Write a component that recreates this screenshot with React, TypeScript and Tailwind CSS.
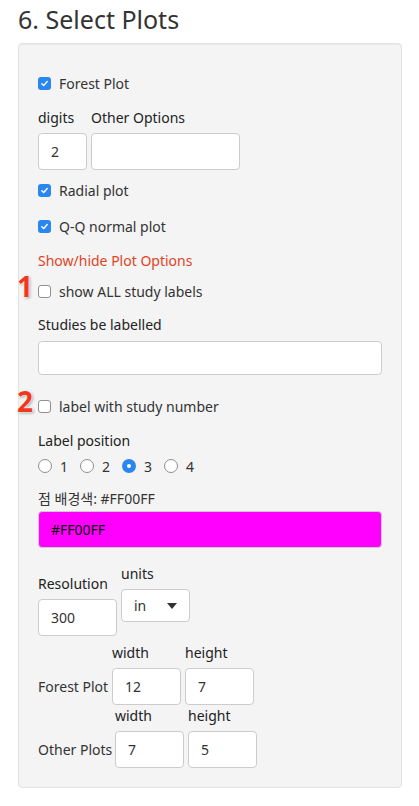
import React from 'react';

const font = { fontFamily: '"Noto Sans", "Noto Sans CJK KR", sans-serif' };

const Check: React.FC<{ checked?: boolean }> = ({ checked }) =>
  checked ? (
    <span className="flex h-[13px] w-[13px] shrink-0 items-center justify-center rounded-[3px] bg-[#2b87f0]">
      <svg viewBox="0 0 10 10" className="h-[9px] w-[9px]">
        <path d="M2 5.2 L4.1 7.2 L8 2.8" fill="none" stroke="white" strokeWidth="1.6" strokeLinecap="round" strokeLinejoin="round" />
      </svg>
    </span>
  ) : (
    <span className="h-[13px] w-[13px] shrink-0 rounded-[3px] border border-[#8f8f8f] bg-white" />
  );

const Radio: React.FC<{ checked?: boolean }> = ({ checked }) =>
  checked ? (
    <span className="flex h-[14px] w-[14px] shrink-0 items-center justify-center rounded-full bg-[#2b87f0]">
      <span className="h-[4px] w-[4px] rounded-full bg-white" />
    </span>
  ) : (
    <span className="h-[14px] w-[14px] shrink-0 rounded-full border border-[#8f8f8f] bg-white" />
  );

const Marker: React.FC<{ n: string }> = ({ n }) => (
  <span className="absolute -left-[21px] -top-[9px] text-[28px] font-bold leading-none text-[#f0391c] [text-shadow:0_0_1px_white,0_0_2px_white,0_0_2px_white,1px_1px_3px_rgba(0,0,0,0.45)]">
    {n}
  </span>
);

const CheckRow: React.FC<{ label: string; checked?: boolean; marker?: string; className?: string }> = ({
  label,
  checked,
  marker,
  className,
}) => (
  <div className={`relative flex h-[20px] items-center gap-[8px] ${className ?? ''}`}>
    {marker && <Marker n={marker} />}
    <Check checked={checked} />
    <span>{label}</span>
  </div>
);

const Box: React.FC<{ value?: string; className?: string; bg?: string }> = ({ value, className, bg }) => (
  <div className={`flex items-center rounded-[4px] border border-[#cccccc] px-[12px] ${bg ?? 'bg-white'} ${className ?? ''}`}>
    {value}
  </div>
);

const Label: React.FC<{ children: React.ReactNode; className?: string }> = ({ children, className }) => (
  <span className={`block h-[20px] font-normal leading-[20px] text-[#222222] ${className ?? ''}`}>
    {children}
  </span>
);

export default function App() {
  return (
    <div className="min-h-[806px] bg-white px-[18px] pt-[4px] text-[14px] text-[#333333]" style={font}>
      <h3 className="h-[39px] text-[25px] leading-[30px] text-[#333333]">6. Select Plots</h3>

      <div className="w-[384px] rounded-[4px] border border-[#e3e3e3] bg-[#f4f4f4] px-[19px] pt-[29px] pb-[19px] shadow-[inset_0_1px_1px_rgba(0,0,0,0.05)]">
        <CheckRow label="Forest Plot" checked />

        <div className="mt-[15px] flex gap-[4px]">
          <div className="flex w-[49px] flex-col">
            <Label>digits</Label>
            <Box value="2" className="mt-[5px] h-[37px] w-[49px]" />
          </div>
          <div className="flex flex-col">
            <Label>Other Options</Label>
            <Box className="mt-[5px] h-[37px] w-[149px]" />
          </div>
        </div>

        <CheckRow label="Radial plot" checked className="mt-[10px]" />
        <CheckRow label="Q-Q normal plot" checked className="mt-[16px]" />

        <div className="mt-[15px] h-[20px] leading-[20px] text-[#e2431f]">Show/hide Plot Options</div>

        <CheckRow label="show ALL study labels" marker="1" className="mt-[10px]" />

        <Label className="mt-[14px]">Studies be labelled</Label>
        <Box className="mt-[6px] h-[34px] w-[344px]" />

        <CheckRow label="label with study number" marker="2" className="mt-[21px]" />

        <Label className="mt-[15px]">Label position</Label>
        <div className="mt-[5px] flex h-[20px] items-center">
          {['1', '2', '3', '4'].map((n) => (
            <div key={n} className="mr-[12px] flex items-center gap-[8px]">
              <Radio checked={n === '3'} />
              <span>{n}</span>
            </div>
          ))}
        </div>

        <div className="mt-[13px] h-[20px] leading-[20px]">점 배경색: #FF00FF</div>
        <Box value="#FF00FF" bg="bg-[#ff00ff]" className="mt-[2px] h-[37px] w-[344px] text-black" />

        <div className="mt-[16px] flex items-start gap-[4px]">
          <div className="flex flex-col pt-[10px]">
            <Label>Resolution</Label>
            <Box value="300" className="mt-[5px] h-[37px] w-[79px]" />
          </div>
          <div className="flex flex-col">
            <Label>units</Label>
            <div className="mt-[5px] flex h-[33px] w-[69px] items-center rounded-[4px] border border-[#cccccc] bg-white pl-[12px] pr-[12px]">
              <span>in</span>
              <svg viewBox="0 0 10 6" className="ml-auto h-[6px] w-[10px]">
                <path d="M0 0 L10 0 L5 6 Z" fill="#333333" />
              </svg>
            </div>
          </div>
        </div>

        <div className="mt-[7px] flex items-end">
          <span className="mb-[8px] w-[74px]">Forest Plot</span>
          <div className="flex flex-col">
            <Label>width</Label>
            <Box value="12" className="mt-[5px] h-[37px] w-[69px]" />
          </div>
          <div className="ml-[4px] flex flex-col">
            <Label>height</Label>
            <Box value="7" className="mt-[5px] h-[37px] w-[69px]" />
          </div>
        </div>

        <div className="mt-[1px] flex items-end">
          <span className="mb-[8px] w-[77px]">Other Plots</span>
          <div className="flex flex-col">
            <Label>width</Label>
            <Box value="7" className="mt-[5px] h-[37px] w-[69px]" />
          </div>
          <div className="ml-[4px] flex flex-col">
            <Label>height</Label>
            <Box value="5" className="mt-[5px] h-[37px] w-[69px]" />
          </div>
        </div>
      </div>
    </div>
  );
}
